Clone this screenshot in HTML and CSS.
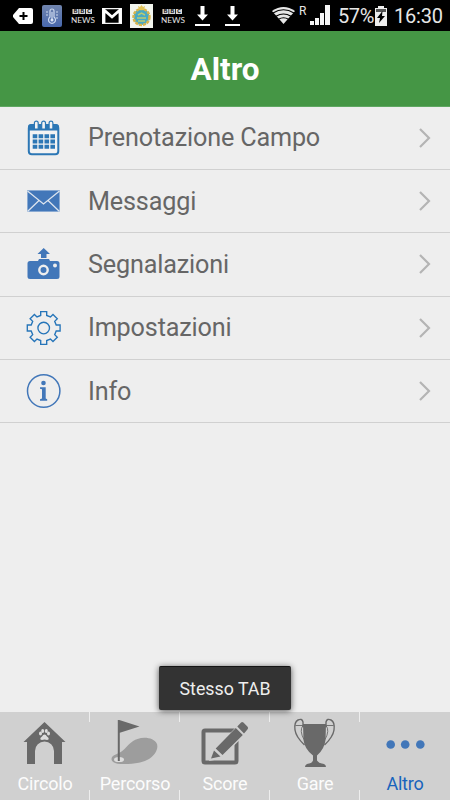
FILE: index.html
```html
<!DOCTYPE html>
<html lang="it">
<head>
<meta charset="utf-8">
<title>Altro</title>
<link rel="stylesheet" href="styles.css">
</head>
<body>
<div class="phone">
  <div class="status">
    <div class="notifications">
      <svg width="20" height="18" viewBox="0 0 20 18"><path fill="#fff" d="M6 1h12q2 0 2 2v12q0 2-2 2H6L0 10V8z"/><path stroke="#000" stroke-width="2" d="M10.500 5v8M6.500 9h8"/></svg>
      <svg width="20" height="22" viewBox="0 0 20 22"><defs><linearGradient id="sky" x2="0" y2="1"><stop stop-color="#7185ae"/><stop offset="1" stop-color="#4868ad"/></linearGradient></defs><rect width="20" height="22" rx="2" fill="url(#sky)"/><path fill="none" stroke="#ccd9ee" stroke-width="1.200" d="M8 12V6a2 2 0 0 1 4 0v6a3.500 3.500 0 1 1-4 0zM10 7v8M4 7h2M4 10h2M14 7h2M14 10h2M14 13h2"/><circle cx="10" cy="15" r="1.500" fill="#dce6f5"/></svg>
      <svg class="bbc-logo" width="28" height="24" viewBox="-3 -4 28 24"><path fill="#d8d8d8" d="M1.500 1h6v5h-6zM8.200 1h6v5h-6zM15 1h6v5h-6z"/><g class="bbc"><text x="2.700" y="5.400">B</text><text x="9.400" y="5.400">B</text><text x="16.200" y="5.400">C</text></g><text class="news" x="0" y="15">NEWS</text></svg>
      <svg width="20" height="16" viewBox="0 0 20 16"><path fill="none" stroke="#f5f5f5" stroke-width="1.200" d="M.6.6h18.800v14.800H.6z"/><path fill="none" stroke="#fff" stroke-width="2.800" d="M2 15V2l8 7 8-7v13"/></svg>
      <svg class="emblem" width="23" height="24" viewBox="0 0 23 24"><path fill="#f2f5ee" d="M0 0h23v24H0z"/><circle cx="11.500" cy="13" r="8" fill="#48a9c4" stroke="#d9b54b" stroke-width="2.500" stroke-dasharray="3 1"/><path fill="#e2c356" d="M8 2l2 1 1.500-2L13 3l2-1-1 4H9z"/><path fill="none" stroke="#bccb70" stroke-width="1.500" d="M7 14h9M8 11l3.500-2 3.500 2M8 17h7"/></svg>
      <svg class="bbc-logo bbc-second" width="28" height="24" viewBox="-3 -4 28 24"><path fill="#d8d8d8" d="M1.500 1h6v5h-6zM8.200 1h6v5h-6zM15 1h6v5h-6z"/><g class="bbc"><text x="2.700" y="5.400">B</text><text x="9.400" y="5.400">B</text><text x="16.200" y="5.400">C</text></g><text class="news" x="0" y="15">NEWS</text></svg>
      <svg class="download" width="15" height="20" viewBox="0 0 15 20"><path fill="#fff" d="M5.500 0h4v8.500H13l-5.500 6-5.500-6h3.500zM0 18h15v2H0z"/></svg>
      <svg class="download-next" width="15" height="20" viewBox="0 0 15 20"><path fill="#fff" d="M5.500 0h4v8.500H13l-5.500 6-5.500-6h3.500zM0 18h15v2H0z"/></svg>
    </div>
    <svg class="wifi" width="23" height="17" viewBox="0 0 23 17"><path fill="#e8e8e8" d="M0 4Q11.500-4 23 4L11.500 17z"/><path fill="none" stroke="#000" stroke-width="1.100" d="M1 6q10.500-6.500 21 0M4 9.200q7.500-4.500 15 0M6.500 12.200q5-3 10 0"/></svg>
    <span class="roaming">R</span>
    <svg class="signal" width="20" height="20" viewBox="0 0 20 20"><path fill="#f5f5f5" d="M0 16h4v4H0zM5 13h4v7H5zM10 8h4v12h-4zM15 0h5v20h-5z"/></svg>
    <span class="percent">57%</span>
    <svg class="battery" width="12" height="20" viewBox="0 0 12 20"><path fill="#eee" d="M3 0h6v2h3v18H0V2h3z"/><path fill="#555" d="M1 3h10v3H1z"/><path fill="#000" d="M7.500 5L2 12h3l-1 5 6-7H7z"/></svg>
    <span class="clock">16:30</span>
  </div>
  <header class="title">Altro</header>
  <main class="menu">
    <div class="row">
      <svg class="icon" viewBox="0 0 36 36"><rect x="2.800" y="5.300" width="29.500" height="29" rx="3" fill="#f3f3f3" stroke="#2c77b5" stroke-width="2"/><path fill="#2c77b5" d="M2 10.500V7q0-3 3-3h25q3 0 3 3v3.500z"/><path fill="#f3f3f3" stroke="#2c77b5" stroke-width="1.200" d="M8.400 9V3a1.900 1.900 0 0 1 3.800 0v6zM15.700 9V3a1.900 1.900 0 0 1 3.800 0v6zM23.100 9V3a1.900 1.900 0 0 1 3.800 0v6z"/><path fill="none" stroke="#2c77b5" stroke-width="4" stroke-dasharray="4.600 1.300" d="M6.700 16.200h22.300M6.700 21.500h22.300M6.700 26.800h22.300"/></svg>
      <span class="label">Prenotazione Campo</span>
      <svg class="chevron" viewBox="0 0 12 20"><path d="M1 1l9 9-9 9"/></svg>
    </div>
    <div class="row">
      <svg class="icon" viewBox="0 0 36 36"><path fill="#4277b9" stroke="#87a8d2" stroke-width=".8" d="M1.500 7.500h32v21h-32z"/><path fill="none" stroke="#dce4ee" stroke-width="1.300" d="M1.500 8l16 13 16-13M1.500 28.500l11.500-11M33.500 28.500l-11.500-11"/></svg>
      <span class="label">Messaggi</span>
      <svg class="chevron" viewBox="0 0 12 20"><path d="M1 1l9 9-9 9"/></svg>
    </div>
    <div class="row">
      <svg class="icon" viewBox="0 0 36 36"><path fill="#4277b9" d="M17.700 2l6.300 6h-3.500v4h-5.500V8h-3.500zM4 15h8l1-2h10l1 2h7q2.500 0 2.500 2.500v13Q33.500 33 31 33H4q-2.500 0-2.500-2.500v-13Q1.500 15 4 15z"/><circle cx="17.500" cy="24" r="4.200" fill="#4277b9" stroke="#eee" stroke-width="2.400"/><circle cx="29" cy="19.500" r="2" fill="#eee"/></svg>
      <span class="label">Segnalazioni</span>
      <svg class="chevron" viewBox="0 0 12 20"><path d="M1 1l9 9-9 9"/></svg>
    </div>
    <div class="row">
      <svg class="icon" viewBox="0 0 36 36"><g transform="translate(17.700 18)" fill="none" stroke="#2675b9" stroke-width="1.350"><path d="M-3-16.400H3V-12.500L6.700-11 9.300-13.600 13.600-9.300 11-6.700 12.500-3H16.400V3H12.500L11 6.700 13.600 9.300 9.300 13.600 6.700 11 3 12.500V16.400H-3V12.500L-6.700 11-9.300 13.600-13.600 9.300-11 6.700-12.500 3H-16.400V-3H-12.500L-11-6.700-13.600-9.300-9.300-13.600-6.700-11-3-12.500Z"/><circle r="5.800"/></g></svg>
      <span class="label">Impostazioni</span>
      <svg class="chevron" viewBox="0 0 12 20"><path d="M1 1l9 9-9 9"/></svg>
    </div>
    <div class="row">
      <svg class="icon" viewBox="0 0 36 36"><circle cx="17.700" cy="18" r="16.200" fill="none" stroke="#4277b9" stroke-width="1.500"/><circle cx="17.500" cy="10" r="2.300" fill="#4277b9"/><path fill="#4277b9" d="M14 14.300h5.700v11.200l1.500.7v1.500H14v-1.500l2-.7V16.300l-2-.5z"/></svg>
      <span class="label">Info</span>
      <svg class="chevron" viewBox="0 0 12 20"><path d="M1 1l9 9-9 9"/></svg>
    </div>
  </main>
  <nav class="tabs">
    <div class="tab">
      <svg viewBox="0 0 60 54"><path fill="#696969" d="M29.500 5L50.500 25H47V47H39V34a9 9 0 0 0-19 0v13h-8V25H8.500z"/><g fill="#ddd"><ellipse cx="25.500" cy="16.500" rx="1.500" ry="2"/><ellipse cx="27.700" cy="14" rx="1.500" ry="2"/><ellipse cx="31.300" cy="14" rx="1.500" ry="2"/><ellipse cx="33.500" cy="16.500" rx="1.500" ry="2"/><path d="M29.500 17.500q1.500 0 2.500 2 2.500 1.500 1.500 3-1 .8-4 0-3 .8-4 0-1-1.500 1.500-3 1-2 2.500-2z"/></g></svg>
      <span>Circolo</span>
    </div>
    <div class="tab">
      <svg viewBox="0 0 60 54"><path fill="#9d9d9d" d="M6.500 42c0-5 7-4 13-10 4-4 7-8 13-10 7-2.500 17-1 19.500 5 1.500 5-2 11-8 15-5 3-12 4.500-21 5-9 .5-16.500-.5-16.500-5z"/><ellipse cx="14" cy="42.500" rx="5" ry="2.600" fill="#ddd"/><path fill="#696969" d="M12.800 3h1.500L34.500 9.500 14.800 15.800V44h-2z"/></svg>
      <span>Percorso</span>
    </div>
    <div class="tab">
      <svg viewBox="0 0 60 54"><rect x="8.500" y="13.500" width="33" height="32" rx="1.500" fill="none" stroke="#696969" stroke-width="4"/><path fill="#d0d0d0" d="M18 34L43 8l9 8-27 26-11 2z"/><path fill="#696969" d="M20.700 31.500L40.800 11l7 7L27.500 38zM19 33.500l6.500 6-9.500 2zM42.300 9.500l3.800-4q1-1 2.300 0l4.200 4.200q1 1.300 0 2.500l-3.600 4.200z"/></svg>
      <span>Score</span>
    </div>
    <div class="tab">
      <svg viewBox="0 0 60 54"><path fill="#696969" d="M18 7h23l-.5 16q-1 9-8.500 15.500v5q2 3 7 3.500 2 1 2 3H20q0-2 2-3 5-.5 6-3.500v-5Q19.500 32 18.500 23z"/><g fill="none" stroke="#696969" stroke-width="1.400"><path d="M18 10V5q-1-4-5-2-4 2-3 10 1 7 9.500 15M41 10V5q1-4 5-2 4 2 3 10-1 7-9.500 15"/><path stroke-width=".9" d="M10.500 8.500H18q-4 5 1 14M48.500 8.500H41q4 5-1 14"/></g></svg>
      <span>Gare</span>
    </div>
    <div class="tab active">
      <svg viewBox="0 0 60 54"><g fill="#4277b9"><circle cx="15.700" cy="27.500" r="4.300"/><circle cx="30.200" cy="27.500" r="4.300"/><circle cx="45.300" cy="27.500" r="4.300"/></g></svg>
      <span>Altro</span>
    </div>
  </nav>
  <div class="toast">Stesso TAB</div>
</div>
</body>
</html>
```
FILE: styles.css
```css
* { box-sizing: border-box; }
body { margin: 0; font-family: Roboto, "Liberation Sans", sans-serif; }
svg { display: block; flex: none; }
.phone {
  position: relative;
  display: flex;
  flex-direction: column;
  width: 450px;
  height: 800px;
  overflow: hidden;
  background: #eee;
}
.status {
  display: flex;
  align-items: center;
  height: 31px;
  padding-left: 13px;
  background: #000;
  color: #e6e6e6;
  white-space: nowrap;
}
.notifications { display: flex; align-items: center; gap: 9px; width: 258px; }
.notifications .emblem { margin-left: -1px; }
.notifications .bbc-logo { margin: 0 -3px; overflow: visible; }
.notifications .bbc-second { margin-left: -4px; }
.notifications .download { margin-left: 3px; }
.notifications .download-next { margin-left: 6px; }
.bbc text { font: bold 5px "Liberation Sans", sans-serif; fill: #000; }
.news { font: 8.200px Lato, sans-serif; fill: #e6e6e6; }
.wifi { margin-left: 1px; }
.roaming { width: 8px; margin: -10px 4px 0; font-size: 12px; line-height: 12px; }
.signal { margin-top: -1px; margin-left: -1px; }
.percent { width: 37px; margin-left: 8px; font-size: 20px; letter-spacing: -0.4px; }
.clock { margin-left: 7px; font-size: 20px; letter-spacing: -0.2px; }
.title {
  height: 75.500px;
  border-bottom: 1px solid #5fa762;
  background: #459645;
  color: #fff;
  font-size: 31.500px;
  font-weight: 700;
  line-height: 78px;
  text-align: center;
}
.menu { flex: 1; }
.row {
  display: flex;
  align-items: center;
  height: 63.400px;
  padding: 0 19px 0 26px;
  border-bottom: 1px solid #d0d0d0;
}
.icon { width: 36px; height: 36px; }
.label {
  flex: 1;
  margin-left: 26px;
  color: #666;
  font-size: 25.200px;
  letter-spacing: -0.16px;
  line-height: 31px;
  white-space: nowrap;
}
.chevron { width: 12px; height: 20px; fill: none; stroke: #b4b4b4; stroke-width: 2.200; }
.tabs {
  display: grid;
  grid-template-columns: repeat(5, 1fr);
  height: 88px;
  background: #d0d0d0;
}
.tab {
  display: flex;
  flex-direction: column;
  align-items: center;
  padding-top: 5px;
  color: #fcfcfc;
  font-size: 18px;
  letter-spacing: -0.2px;
  line-height: 25px;
  background: linear-gradient(#eee 0 10px, transparent 10px 78px, #eee 78px) right top / 1px 100% no-repeat;
}
.tab:last-child { background: none; }
.tab svg { width: 60px; height: 54px; }
.tab.active { color: #1763bd; }
.toast {
  position: absolute;
  left: 159px;
  top: 666px;
  width: 132px;
  height: 44px;
  border-top: 1px solid #151515;
  border-radius: 2px;
  background: #333;
  box-shadow: 0 1px 6px rgba(0, 0, 0, 0.65);
  color: #eee;
  font-size: 17.800px;
  line-height: 44px;
  text-align: center;
}
```
